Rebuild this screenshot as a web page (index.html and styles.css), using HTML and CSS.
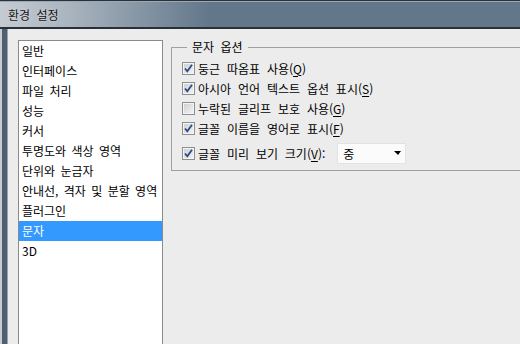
FILE: index.html
```html
<!DOCTYPE html>
<html lang="ko">
<head>
    <meta charset="UTF-8">
    <title>환경 설정</title>
    <link rel="stylesheet" href="styles.css">
</head>
<body>
    <div class="titlebar"><span class="title">환경 설정</span></div>
    <div class="window">
        <div class="frame"></div>
        <div class="client">
            <ul class="nav">
                <li>일반</li>
                <li>인터페이스</li>
                <li>파일 처리</li>
                <li>성능</li>
                <li>커서</li>
                <li>투명도와 색상 영역</li>
                <li>단위와 눈금자</li>
                <li>안내선, 격자 및 분할 영역</li>
                <li>플러그인</li>
                <li class="selected">문자</li>
                <li>3D</li>
            </ul>
            <fieldset class="group">
                <legend>문자 옵션</legend>
                <label class="option"><span class="box"><svg viewBox="0 0 11 11"><path d="M2 5.5 L4.3 8.3 L9 1.8"/></svg></span><span>둥근 따옴표 사용(<u>Q</u>)</span></label>
                <label class="option"><span class="box"><svg viewBox="0 0 11 11"><path d="M2 5.5 L4.3 8.3 L9 1.8"/></svg></span><span>아시아 언어 텍스트 옵션 표시(<u>S</u>)</span></label>
                <label class="option"><span class="box"></span><span>누락된 글리프 보호 사용(<u>G</u>)</span></label>
                <label class="option"><span class="box"><svg viewBox="0 0 11 11"><path d="M2 5.5 L4.3 8.3 L9 1.8"/></svg></span><span>글꼴 이름을 영어로 표시(<u>F</u>)</span></label>
                <div class="option size-row">
                    <label class="option"><span class="box"><svg viewBox="0 0 11 11"><path d="M2 5.5 L4.3 8.3 L9 1.8"/></svg></span><span>글꼴 미리 보기 크기(<u>V</u>):</span></label>
                    <div class="select"><span>중</span><span class="arrow"></span></div>
                </div>
            </fieldset>
        </div>
    </div>
</body>
</html>
```

FILE: styles.css
```css
body {
    margin: 0;
    width: 520px;
    height: 344px;
    overflow: hidden;
    font-family: "Noto Sans CJK KR", "Noto Sans", sans-serif;
    font-size: 12px;
    color: #000;
    background: #ececec;
}
.titlebar {
    height: 26px;
    border-top: 1px solid #2b3138;
    border-bottom: 2px solid #283039;
    box-shadow: inset 0 1px #9aa8b6;
    background: linear-gradient(to right, #c4cbd2 0, #a9b4bf 70px, #62778a 210px);
    display: flex;
    align-items: center;
    padding-left: 8px;
}
.title {
    color: #151515;
    word-spacing: 3px;
    text-shadow: 0 0 3px rgba(255, 255, 255, 0.5);
}
.window {
    display: flex;
    height: 315px;
}
.frame {
    width: 8px;
    flex: none;
    background: linear-gradient(to right, #c9cdd1 0 2px, #4d5f71 2px 7px, #9aa2aa 7px);
}
.client {
    flex: 1;
    display: flex;
    align-items: flex-start;
    padding: 10px 0 0 10px;
    overflow: hidden;
}
.nav {
    list-style: none;
    margin: 1px 0 0;
    padding: 0;
    width: 143px;
    height: 320px;
    flex: none;
    border: 1px solid #8a8a8a;
    background: #fff;
}
.nav li {
    height: 20px;
    line-height: 20px;
    padding-left: 3px;
    word-spacing: 2px;
    white-space: nowrap;
}
.nav .selected {
    background: #3399ff;
    color: #fff;
}
.group {
    flex: none;
    box-sizing: border-box;
    width: 400px;
    margin: 0 0 0 8px;
    padding: 3px 0 6px 10px;
    border: 1px solid #a0a0a0;
}
.group legend {
    margin-left: 5px;
    padding: 0 5px;
    line-height: 16px;
    word-spacing: 3px;
}
.option {
    display: flex;
    align-items: center;
    height: 20px;
    gap: 3px;
    word-spacing: 3.5px;
    white-space: nowrap;
}
.option u {
    text-underline-offset: 2px;
}
.box {
    width: 11px;
    height: 11px;
    flex: none;
    border: 1px solid #8e8f8f;
    box-shadow: inset 0 0 0 1px #f4f4f4;
    background: linear-gradient(135deg, #cdcdcd, #f5f5f5);
}
.box svg {
    display: block;
    width: 11px;
    height: 11px;
}
.box path {
    fill: none;
    stroke: #2b4a86;
    stroke-width: 1.8;
}
.size-row {
    height: 22px;
    margin-top: 4px;
    gap: 0;
}
.select {
    box-sizing: border-box;
    width: 69px;
    height: 21px;
    margin-left: 12px;
    padding: 0 4px 0 5px;
    display: flex;
    align-items: center;
    justify-content: space-between;
    background: #fbfbfb;
    border: 1px solid #e2e2e2;
}
.arrow {
    width: 0;
    height: 0;
    border-left: 4px solid transparent;
    border-right: 3px solid transparent;
    border-top: 4px solid #000;
}
```
